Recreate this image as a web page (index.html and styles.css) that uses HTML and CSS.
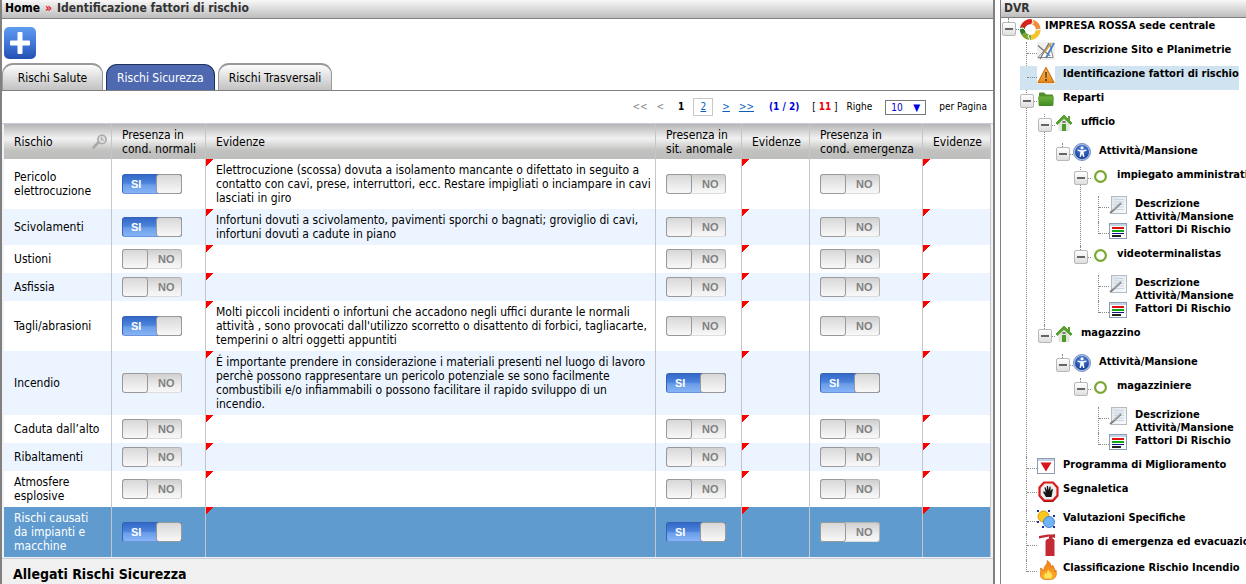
FILE: index.html
```html
<!DOCTYPE html>
<html lang="it">
<head>
<meta charset="utf-8">
<title>Identificazione fattori di rischio</title>
<link rel="stylesheet" href="styles.css">
</head>
<body>
<svg class="defs" aria-hidden="true">
  <defs>
    <linearGradient id="gBlue" x1="0" y1="0" x2="0" y2="1"><stop offset="0" stop-color="#5f9cf0"/><stop offset="0.55" stop-color="#3f74d6"/><stop offset="1" stop-color="#2450b0"/></linearGradient>
    <linearGradient id="gGreen" x1="0" y1="0" x2="0" y2="1"><stop offset="0" stop-color="#6fb03c"/><stop offset="1" stop-color="#3c8a22"/></linearGradient>
    <linearGradient id="gWarn" x1="0" y1="0" x2="0" y2="1"><stop offset="0" stop-color="#fbb95c"/><stop offset="1" stop-color="#e98a1c"/></linearGradient>
    <radialGradient id="gPerson" cx="0.5" cy="0.3" r="0.7"><stop offset="0" stop-color="#5b8be0"/><stop offset="1" stop-color="#123a94"/></radialGradient>
    <linearGradient id="gPaper" x1="0" y1="0" x2="1" y2="1"><stop offset="0" stop-color="#dbe3ea"/><stop offset="1" stop-color="#fafcfd"/></linearGradient>
    <linearGradient id="gFire" x1="0" y1="0" x2="0" y2="1"><stop offset="0" stop-color="#f07a10"/><stop offset="1" stop-color="#ffb52a"/></linearGradient>
    <symbol id="house" viewBox="0 0 18 18"><path d="M9 1 17 9 15.500 10.500 9 4.500 2.500 10.500 1 9Z" fill="#58a030" stroke="#58a030"/><path d="M13 2h2v5l-2-2Z" fill="#58a030"/><path d="M3.500 10 9 5.500 14.500 10V17h-11Z" fill="#e3e6e0"/><path d="M7 10h4v7H7Z" fill="#4e9a28"/><path d="M7.500 7h3v2h-3Z" fill="#777"/></symbol>
    <symbol id="person" viewBox="0 0 18 18"><circle cx="9" cy="9" r="8.500" fill="#a9bfe8" stroke="#7a90c4"/><circle cx="9" cy="9" r="7" fill="url(#gPerson)"/><circle cx="9" cy="4.800" r="1.500" fill="#fff"/><path d="M4.500 6.500 8 7.200h2l3.500-.7v1.300l-3 1 1 5-1.300.3L9 10.800 7.800 14.100l-1.300-.3 1-5-3-1Z" fill="#fff"/></symbol>
    <symbol id="ring" viewBox="0 0 18 18"><circle cx="9.500" cy="9.500" r="5.400" fill="#fff" stroke="#78a832" stroke-width="2.200"/></symbol>
    <symbol id="note" viewBox="0 0 18 18"><rect x="2.500" y="0.500" width="15" height="17" fill="url(#gPaper)" stroke="#b4bcc4"/><path d="M5 3.500h10M5 6h10M5 8.500h10M5 11h10M5 13.500h10" stroke="#cbd5df"/><path d="M1 17 4 14.500 12 7" fill="none" stroke="#808080" stroke-width="2"/><path d="m4.500 13.500 7-6.500" stroke="#d0d0d0" stroke-width=".8"/></symbol>
    <symbol id="list" viewBox="0 0 18 18"><rect x=".5" y="1.500" width="17" height="15" fill="#fff" stroke="#8b9cb5"/><path d="M1 3h16" stroke="#c4d2e6" stroke-width="2"/><path d="M3 6h12" stroke="#e01010" stroke-width="2"/><path d="M3 9h12" stroke="#0caa18" stroke-width="2"/><path d="M3 11.500h12" stroke="#10109a"/><path d="M3 14h9" stroke="#222" stroke-width="2"/></symbol>
  </defs>
</svg>
<div class="app">
  <main class="main">
    <nav class="bar" aria-label="Percorso"><a class="home" href="#">Home</a><span class="sep">»</span><span>Identificazione fattori di rischio</span></nav>
    <div class="tools">
      <button class="add" type="button" aria-label="Aggiungi"><svg width="32" height="32" viewBox="0 0 32 32"><rect width="32" height="32" rx="5" fill="url(#gBlue)"/><path d="M14.500 5h3a1 1 0 0 1 1 1v7.500H25a1 1 0 0 1 1 1v3a1 1 0 0 1-1 1h-6.500V26a1 1 0 0 1-1 1h-3a1 1 0 0 1-1-1v-7.500H7a1 1 0 0 1-1-1v-3a1 1 0 0 1 1-1h6.500V6a1 1 0 0 1 1-1Z" fill="#fff"/></svg></button>
    </div>
    <div class="tabs">
      <button class="tab" type="button">Rischi Salute</button>
      <button class="tab active" type="button">Rischi Sicurezza</button>
      <button class="tab" type="button">Rischi Trasversali</button>
    </div>
    <div class="pager">
      <span class="off">&lt;&lt;</span><span class="off">&lt;</span>
      <b class="current">1</b><a class="page" href="#">2</a>
      <a href="#">&gt;</a><a href="#">&gt;&gt;</a>
      <b class="count">(1 / 2)</b>
      <span class="total">[ <b>11</b> ]</span>
      <label for="rows">Righe</label>
      <span class="rows"><select id="rows"><option>10</option></select></span>
      <span class="per">per Pagina</span>
    </div>
    <div class="panel">
      <table class="risks">
        <colgroup><col class="c-name"><col class="c-norm"><col><col class="c-anom"><col class="c-ev"><col class="c-emer"><col class="c-ev"></colgroup>
        <thead>
          <tr>
            <th><span class="name-head">Rischio<svg width="16" height="16" viewBox="0 0 16 16"><circle cx="10" cy="5.500" r="4.200" fill="#ddd" stroke="#aaa" stroke-width="1.600"/><path d="M9.500 3v3H12" fill="none" stroke="#aaa"/><path d="m6.500 8.500-5 5" stroke="#a8a8a8" stroke-width="2.600" stroke-linecap="round"/></svg></span></th>
            <th>Presenza in<br>cond. normali</th><th>Evidenze</th><th>Presenza in<br>sit. anomale</th><th>Evidenze</th><th>Presenza in<br>cond. emergenza</th><th>Evidenze</th>
          </tr>
        </thead>
        <tbody>
          <tr><td>Pericolo elettrocuzione</td><td><label class="switch on"><input type="checkbox" checked><span>SI</span></label></td><td class="ev">Elettrocuzione (scossa) dovuta a isolamento mancante o difettato in seguito a contatto con cavi, prese, interruttori, ecc. Restare impigliati o inciampare in cavi lasciati in giro</td><td><label class="switch"><input type="checkbox"><span>NO</span></label></td><td class="ev"></td><td><label class="switch"><input type="checkbox"><span>NO</span></label></td><td class="ev"></td></tr>
          <tr><td>Scivolamenti</td><td><label class="switch on"><input type="checkbox" checked><span>SI</span></label></td><td class="ev">Infortuni dovuti a scivolamento, pavimenti sporchi o bagnati; groviglio di cavi, infortuni dovuti a cadute in piano</td><td><label class="switch"><input type="checkbox"><span>NO</span></label></td><td class="ev"></td><td><label class="switch"><input type="checkbox"><span>NO</span></label></td><td class="ev"></td></tr>
          <tr><td>Ustioni</td><td><label class="switch"><input type="checkbox"><span>NO</span></label></td><td class="ev"></td><td><label class="switch"><input type="checkbox"><span>NO</span></label></td><td class="ev"></td><td><label class="switch"><input type="checkbox"><span>NO</span></label></td><td class="ev"></td></tr>
          <tr><td>Asfissia</td><td><label class="switch"><input type="checkbox"><span>NO</span></label></td><td class="ev"></td><td><label class="switch"><input type="checkbox"><span>NO</span></label></td><td class="ev"></td><td><label class="switch"><input type="checkbox"><span>NO</span></label></td><td class="ev"></td></tr>
          <tr><td>Tagli/abrasioni</td><td><label class="switch on"><input type="checkbox" checked><span>SI</span></label></td><td class="ev">Molti piccoli incidenti o infortuni che accadono negli uffici durante le normali attività , sono provocati dall'utilizzo scorretto o disattento di forbici, tagliacarte, temperini o altri oggetti appuntiti</td><td><label class="switch"><input type="checkbox"><span>NO</span></label></td><td class="ev"></td><td><label class="switch"><input type="checkbox"><span>NO</span></label></td><td class="ev"></td></tr>
          <tr><td>Incendio</td><td><label class="switch"><input type="checkbox"><span>NO</span></label></td><td class="ev">É importante prendere in considerazione i materiali presenti nel luogo di lavoro perchè possono rappresentare un pericolo potenziale se sono facilmente combustibili e/o infiammabili o possono facilitare il rapido sviluppo di un incendio.</td><td><label class="switch on"><input type="checkbox" checked><span>SI</span></label></td><td class="ev"></td><td><label class="switch on"><input type="checkbox" checked><span>SI</span></label></td><td class="ev"></td></tr>
          <tr><td>Caduta dall’alto</td><td><label class="switch"><input type="checkbox"><span>NO</span></label></td><td class="ev"></td><td><label class="switch"><input type="checkbox"><span>NO</span></label></td><td class="ev"></td><td><label class="switch"><input type="checkbox"><span>NO</span></label></td><td class="ev"></td></tr>
          <tr><td>Ribaltamenti</td><td><label class="switch"><input type="checkbox"><span>NO</span></label></td><td class="ev"></td><td><label class="switch"><input type="checkbox"><span>NO</span></label></td><td class="ev"></td><td><label class="switch"><input type="checkbox"><span>NO</span></label></td><td class="ev"></td></tr>
          <tr><td>Atmosfere esplosive</td><td><label class="switch"><input type="checkbox"><span>NO</span></label></td><td class="ev"></td><td><label class="switch"><input type="checkbox"><span>NO</span></label></td><td class="ev"></td><td><label class="switch"><input type="checkbox"><span>NO</span></label></td><td class="ev"></td></tr>
          <tr class="selected"><td>Rischi causati da impianti e macchine</td><td><label class="switch on"><input type="checkbox" checked><span>SI</span></label></td><td class="ev"></td><td><label class="switch on"><input type="checkbox" checked><span>SI</span></label></td><td class="ev"></td><td><label class="switch"><input type="checkbox"><span>NO</span></label></td><td class="ev"></td></tr>
        </tbody>
      </table>
    </div>
    <h2 class="attachments">Allegati Rischi Sicurezza</h2>
  </main>
  <aside class="side">
    <div class="bar">DVR</div>
    <ul class="tree">
      <li class="root"><div class="row"><button class="toggle" type="button" aria-label="Comprimi"></button><svg class="icon big" viewBox="0 0 22 22"><g fill="none" stroke-width="5"><path d="M3.500 9.500A8.200 8.200 0 0 1 13 3.800" stroke="#d5231c"/><path d="M13 3.800A8.200 8.200 0 0 1 19.200 12" stroke="#f08a3c"/><path d="M19.200 12A8.200 8.200 0 0 1 12 19.500" stroke="#f3c42c"/><path d="M12 19.500A8.200 8.200 0 0 1 4.500 15.500" stroke="#77a62a"/><path d="M4.500 15.500A8.200 8.200 0 0 1 3.500 9.500" stroke="#2e7d2b"/></g><path d="m12.500 0 2 5-3 2M22 11l-5 1-2-3M11 22l-2-4 3-3M0 11l4-1 3 3" fill="none" stroke="#fff" stroke-width="1"/></svg><a href="#">IMPRESA ROSSA sede centrale</a></div>
        <ul>
          <li><div class="row leaf"><svg class="icon" viewBox="0 0 18 18"><rect width="18" height="18" fill="#f0f0ee"/><path d="M1 15.500h15L13 2Z" fill="#fff" stroke="#8a8a8a"/><path d="M1 3.500 13 14M3 17 12 1" stroke="#777" stroke-width="1.300"/><path d="M17 1 9 16" stroke="#4a86c8" stroke-width="2"/><path d="M14.500 1 7 11" stroke="#d9a33a" stroke-width="1.300"/></svg><a href="#">Descrizione Sito e Planimetrie</a></div></li>
          <li><div class="row leaf current-row"><svg class="icon" viewBox="0 0 18 18"><rect width="18" height="18" fill="#fff"/><path d="M9 1.500 17 16.500H1Z" fill="url(#gWarn)" stroke="#d07a18" stroke-linejoin="round" stroke-width="1.300"/><path d="M8 6h2l-.4 6H8.400Z" fill="#6b4a20"/><rect x="8" y="13" width="2" height="2" fill="#6b4a20"/></svg><a href="#">Identificazione fattori di rischio</a></div></li>
          <li><div class="row"><button class="toggle" type="button" aria-label="Comprimi"></button><svg class="icon" viewBox="0 0 18 18"><path d="M2 3.500a1 1 0 0 1 1-1h4l2 2h6a1 1 0 0 1 1 1V8H2Z" fill="#4f8f2c"/><path d="M1 6.500h16l-.7 8.500a1 1 0 0 1-1 1H2.700a1 1 0 0 1-1-1Z" fill="url(#gGreen)"/></svg><a href="#">Reparti</a></div>
            <ul>
              <li><div class="row"><button class="toggle" type="button" aria-label="Comprimi"></button><svg class="icon"><use href="#house"/></svg><a href="#">ufficio</a></div>
                <ul class="spaced">
                  <li><div class="row"><button class="toggle" type="button" aria-label="Comprimi"></button><svg class="icon"><use href="#person"/></svg><a href="#">Attività/Mansione</a></div>
                    <ul>
                      <li><div class="row"><button class="toggle" type="button" aria-label="Comprimi"></button><svg class="icon"><use href="#ring"/></svg><a href="#">impiegato amministrati</a></div>
                        <ul class="spaced">
                          <li><div class="row leaf two"><svg class="icon"><use href="#note"/></svg><a href="#">Descrizione<br>Attività/Mansione</a></div></li>
                          <li><div class="row leaf"><svg class="icon"><use href="#list"/></svg><a href="#">Fattori Di Rischio</a></div></li>
                        </ul>
                      </li>
                      <li><div class="row"><button class="toggle" type="button" aria-label="Comprimi"></button><svg class="icon"><use href="#ring"/></svg><a href="#">videoterminalistas</a></div>
                        <ul class="spaced">
                          <li><div class="row leaf two"><svg class="icon"><use href="#note"/></svg><a href="#">Descrizione<br>Attività/Mansione</a></div></li>
                          <li><div class="row leaf"><svg class="icon"><use href="#list"/></svg><a href="#">Fattori Di Rischio</a></div></li>
                        </ul>
                      </li>
                    </ul>
                  </li>
                </ul>
              </li>
              <li><div class="row"><button class="toggle" type="button" aria-label="Comprimi"></button><svg class="icon"><use href="#house"/></svg><a href="#">magazzino</a></div>
                <ul class="spaced">
                  <li><div class="row"><button class="toggle" type="button" aria-label="Comprimi"></button><svg class="icon"><use href="#person"/></svg><a href="#">Attività/Mansione</a></div>
                    <ul>
                      <li><div class="row"><button class="toggle" type="button" aria-label="Comprimi"></button><svg class="icon"><use href="#ring"/></svg><a href="#">magazziniere</a></div>
                        <ul class="spaced">
                          <li><div class="row leaf two"><svg class="icon"><use href="#note"/></svg><a href="#">Descrizione<br>Attività/Mansione</a></div></li>
                          <li><div class="row leaf"><svg class="icon"><use href="#list"/></svg><a href="#">Fattori Di Rischio</a></div></li>
                        </ul>
                      </li>
                    </ul>
                  </li>
                </ul>
              </li>
            </ul>
          </li>
          <li><div class="row leaf"><svg class="icon" viewBox="0 0 18 18"><rect x=".5" y="1.500" width="17" height="15" fill="#fff" stroke="#8b9cb5"/><path d="M1 3h16" stroke="#c4d2e6" stroke-width="2"/><path d="M3.500 5.500h11L9 14.500Z" fill="#d8141c"/></svg><a href="#">Programma di Miglioramento</a></div></li>
          <li><div class="row leaf tall"><svg class="icon big" viewBox="0 0 22 22"><path d="M7 2.500h9l5 5v8l-5 5.500H7l-5-5.500v-8Z" fill="#6d1010"/><path d="M7 1.500h9l4.500 5v8l-4.500 5H7l-4.500-5v-8Z" fill="#eee" stroke="#d81a1a" stroke-width="2.200"/><path d="M9 16 6 11l1-.7 1.700 1.500L7.500 6.500l1-.3L10 9.500l-.2-4.500h1.200l.7 4.300.9-3.800 1.100.2-.2 4.600 1.500-2.500.9.500L14.500 16Z" fill="#151515"/></svg><a href="#">Segnaletica</a></div></li>
          <li><div class="row leaf"><svg class="icon" viewBox="0 0 18 18"><circle cx="6.500" cy="6.500" r="5.500" fill="#fbc720" stroke="#d59a10"/><circle cx="12" cy="12" r="5.500" fill="#6fb4f4" stroke="#4a86d0"/><path d="M0 0h2v2H0zM11 0h2v2h-2zM16 5h2v2h-2zM0 11h2v2H0zM5 16h2v2H5zM16 16h2v2h-2z" fill="#1a2a9a"/></svg><a href="#">Valutazioni Specifiche</a></div></li>
          <li><div class="row leaf mid"><svg class="icon big" viewBox="0 0 22 22"><path d="M8.500 8q0-3 3.500-3.500V2.500L2 4.500V2L11 .5h4L18 0v4l-2.500-.7v1.200Q18 5.500 17.500 8v14h-9Z" fill="#c42a34"/></svg><a href="#">Piano di emergenza ed evacuazio</a></div></li>
          <li><div class="row leaf"><svg class="icon big" viewBox="0 0 22 22"><path d="M8 19.500Q3 19 3.500 14 4 11 3.500 8 6 9 7 11 6.500 7 9 5q2-2 1-4.500 4 2 4.500 7.500L15.500 5q3 4 2 7l1.500-2q2 9-5.500 9.500Z" fill="url(#gFire)" stroke="#d86a10" stroke-width=".7"/><path d="M8 18.500q-2-3 .5-6l1 2Q10 11 11.500 9.500 12 13 14 12.500q2 3.500 0 6Z" fill="#ffe45a"/></svg><a href="#">Classificazione Rischio Incendio</a></div></li>
        </ul>
      </li>
    </ul>
  </aside>
</div>
</body>
</html>
```

FILE: styles.css
```css
*, *::before, *::after { box-sizing: border-box; }
body { margin: 0; background: #fff; color: #000; font: 12px/14px "DejaVu Sans Condensed", "DejaVu Sans", Tahoma, sans-serif; }
button, select { font: inherit; }
.defs { position: absolute; width: 0; height: 0; }
.app { display: grid; grid-template-columns: minmax(0, 1fr) 246px; column-gap: 5px; height: 100vh; overflow: hidden; }
.main { display: flex; flex-direction: column; border-left: 2px solid #808080; border-right: 2px solid #808080; }
.side { border-left: 1px solid #808080; overflow: hidden; }

.bar { display: flex; gap: 5px; height: 19px; padding: 0 3px; align-items: flex-start; border-bottom: 1px solid #808080; background: linear-gradient(#f8f8f8, #bdbdbd); color: #333; font-weight: bold; line-height: 16px; white-space: nowrap; }
.home { color: #000; text-decoration: none; }
.sep { color: #e81020; }
.side .bar { height: 18px; }

.tools { padding: 8px 2px 4px; }
.add { display: block; padding: 0; border: 0; background: none; }
.add svg { display: block; }

.tabs { display: flex; align-items: flex-end; gap: 3px; border-bottom: 1px solid #808080; }
.tab { min-width: 101px; height: 27px; padding: 0 10px; border: 1px solid #999; border-top-width: 2px; border-bottom: 0; border-radius: 11px 11px 0 0; background: linear-gradient(#fdfdfd, #e2e2e2 45%, #c2c2c2); color: #000; }
.tab.active { height: 26px; border: 1px solid #22305e; border-bottom: 0; background: #4f69b0; color: #fff; }

.pager { display: flex; align-items: center; justify-content: flex-end; gap: 9px; height: 32px; padding-right: 6px; font-size: 10px; white-space: nowrap; }
.pager a { color: #0a5fc0; }
.off { color: #888; }
.current { padding: 0 0 0 5px; }
.page { width: 20px; border: 1px solid #c8c8c8; line-height: 16px; text-align: center; }
.count { padding: 0 4px 0 6px; color: #0000e0; }
.total b { color: #f00000; }
.rows { position: relative; margin-left: 4px; }
.rows::after { content: "▼"; position: absolute; right: 6px; top: 0; color: #0000e0; font-size: 10px; line-height: 15px; pointer-events: none; }
.rows select { display: block; appearance: none; width: 41px; height: 15px; padding: 0 5px; border: 1px solid #777; border-radius: 0; background: #fff; color: #0000e0; line-height: 13px; }
.per { margin-left: 4px; }

.panel { padding: 0 2px 1px; border: 1px solid #c8ccd8; border-width: 1px 0; background: #f0f2f8; }
.risks { width: 100%; table-layout: fixed; border-collapse: separate; border-spacing: 0; background: #fff; }
.c-name { width: 108px; }
.c-norm { width: 94px; }
.c-anom { width: 86px; }
.c-ev { width: 68px; }
.c-emer { width: 113px; }
.risks th, .risks td { padding: 4px 10px; border-right: 1px solid #c6c6c8; text-align: left; font-weight: normal; vertical-align: middle; }
.risks th { height: 35px; padding: 3px 0 3px 10px; white-space: nowrap; }
.risks thead tr { background: linear-gradient(#b5b5b5, #f0f0f0 40%, #eee 45%, #c2c2c0 75%, #bdbdbd); }
.name-head { display: flex; align-items: center; justify-content: space-between; padding-right: 3px; }
.risks tbody tr:nth-child(even) { background: #ebf4ff; }
.risks tbody .selected, .risks tbody .selected:nth-child(even) { background: #5f9bce; color: #fff; }
.risks td.ev { padding-right: 2px; background: linear-gradient(to bottom right, #f00 50%, transparent 50%) 0 0 / 7px 8px no-repeat; }

.switch { position: relative; display: flex; align-items: center; width: 60px; height: 20px; border: 1px solid #b4b4b4; border-bottom-color: #ddd; border-radius: 3px; background: linear-gradient(#cfcfcf, #ececec 60%, #f8f8f8); color: #808080; font: bold 11px/18px "Liberation Sans", sans-serif; }
.switch input { position: absolute; inset: 0; width: 100%; height: 100%; margin: 0; opacity: 0; }
.switch::before { content: ""; flex: none; width: 26px; height: 20px; margin: -1px 0 -1px -1px; border: 1px solid #999; border-radius: 3px; background: linear-gradient(#d8d8d8, #f8f8f8); }
.switch span { flex: 1; padding-left: 10px; }
.switch.on { border-color: #3563b8; border-bottom-color: #6a94dd; background: linear-gradient(#3468c8, #4a83dc 45%, #6a9ce8 55%, #86b4f6); color: #fff; }
.switch.on::before { order: 2; margin: -1px -1px -1px 0; }
.switch.on span { padding-left: 8px; }

.attachments { flex: 1; margin: 0; padding: 6px 11px; background: #f0f0f0; font-size: 14px; line-height: 18px; }

.tree, .tree ul { margin: 0; padding: 0; list-style: none; }
.tree { padding-left: 1px; color: #000; font-size: 11px; font-weight: bold; line-height: 13px; white-space: nowrap; }
.tree ul { padding-left: 18px; }
.tree ul.spaced { padding-top: 5px; }
.tree a { padding-top: 1px; color: #000; text-decoration: none; }
.tree li { position: relative; }
.tree li::before { content: ""; position: absolute; left: 6px; top: 0; bottom: 0; border-left: 1px dotted #888; }
.tree li:last-child::before { bottom: auto; height: 12px; }
.row { position: relative; display: flex; align-items: flex-start; height: 24px; width: max-content; }
.row::before { content: ""; position: absolute; left: 7px; top: 11px; width: 10px; border-top: 1px dotted #888; }
.row.leaf { padding-left: 14px; }
.row.two { height: 26px; }
.row.mid { height: 26px; }
.row.tall { height: 29px; }
.current-row { background: #cfe3f0; }
.toggle { position: relative; flex: none; width: 14px; height: 14px; margin-top: 4px; padding: 0; border: 1px solid #b8b8b8; border-radius: 2px; background: linear-gradient(#fff, #dedede); }
.toggle::before { content: ""; position: absolute; left: 2px; top: 5px; width: 8px; height: 2px; background: #666; }
.icon { position: relative; flex: none; width: 18px; height: 18px; margin: 0 8px 0 3px; }
.icon.big { width: 22px; height: 22px; margin: 0 4px 0 3px; }
```
